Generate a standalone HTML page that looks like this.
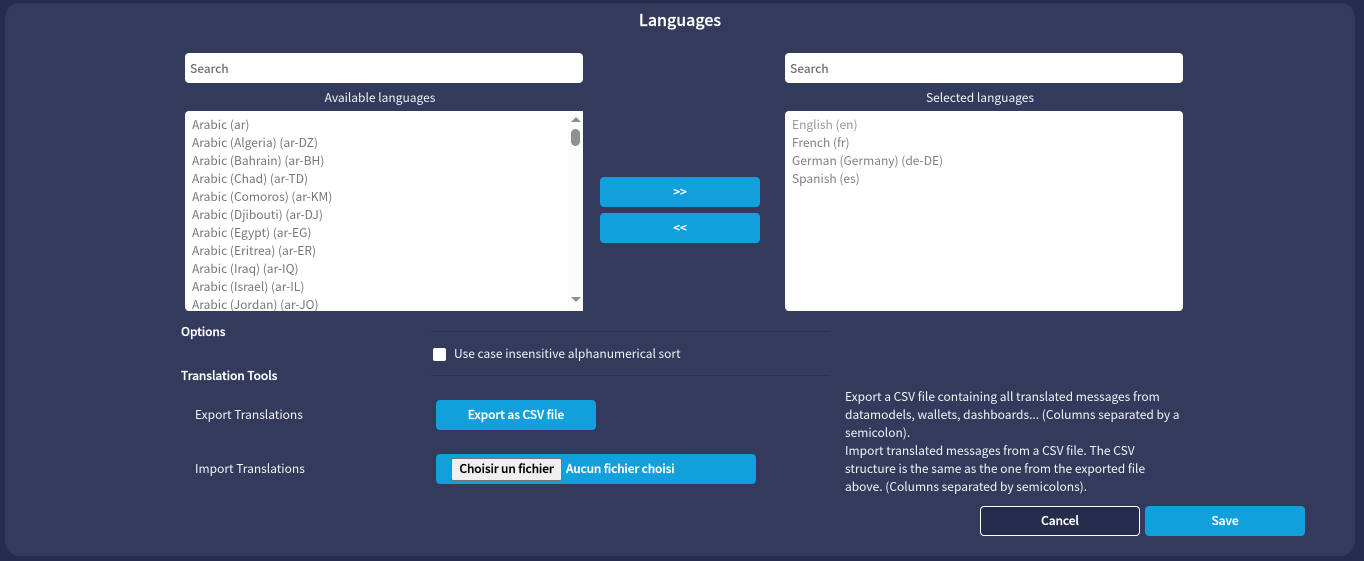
<!DOCTYPE html>
<html><head><meta charset="utf-8">
<style>
html,body{margin:0;padding:0;width:1364px;height:561px;overflow:hidden;background:#262c4e;font-family:"Noto Sans CJK JP","Liberation Sans",sans-serif;}
div{position:absolute;box-sizing:border-box}
.t{white-space:nowrap;font-size:12px;line-height:18px;color:#f2f3f6}
.c{text-align:center}
.b{font-weight:500;color:#fff;font-size:12px;letter-spacing:-.1px;-webkit-text-stroke:.2px #fff}
.box{background:#fff;border-radius:4px}
.btn{background:#11a0dc;border-radius:4px;height:30px;line-height:30px;text-align:center;color:#fff;font-weight:500;font-size:12px;white-space:nowrap;letter-spacing:-.1px;-webkit-text-stroke:.2px #fff}
.l{left:7px;white-space:nowrap;font-size:12px;line-height:18px;color:#777}
.ph{left:5px;top:7px;font-weight:500;font-size:12px;line-height:18px;color:#707070;letter-spacing:-.1px}
.hr{left:431px;width:399px;height:1px;background:#2b3153}
</style></head><body>
<div style="left:5px;top:3px;width:1350px;height:553px;background:#333a5c;border-radius:15px"></div>
<div class="c" style="left:5px;width:1350px;top:9px;color:#fff;font-weight:500;font-size:16px;line-height:20px;-webkit-text-stroke:.2px #fff">Languages</div>

<div class="box" style="left:185px;top:53px;width:398px;height:30px"><div class="ph">Search</div></div>
<div class="box" style="left:785px;top:53px;width:398px;height:30px"><div class="ph">Search</div></div>
<div class="t c" style="left:185px;top:89px;width:390px">Available languages</div>
<div class="t c" style="left:785px;top:89px;width:390px">Selected languages</div>

<div class="box" style="left:185px;top:111px;width:398px;height:200px;overflow:hidden;border-radius:4px 0 0 4px">
<div class="l" style="top:5px">Arabic (ar)</div>
<div class="l" style="top:23px">Arabic (Algeria) (ar-DZ)</div>
<div class="l" style="top:41px">Arabic (Bahrain) (ar-BH)</div>
<div class="l" style="top:59px">Arabic (Chad) (ar-TD)</div>
<div class="l" style="top:77px">Arabic (Comoros) (ar-KM)</div>
<div class="l" style="top:95px">Arabic (Djibouti) (ar-DJ)</div>
<div class="l" style="top:113px">Arabic (Egypt) (ar-EG)</div>
<div class="l" style="top:131px">Arabic (Eritrea) (ar-ER)</div>
<div class="l" style="top:149px">Arabic (Iraq) (ar-IQ)</div>
<div class="l" style="top:167px">Arabic (Israel) (ar-IL)</div>
<div class="l" style="top:185px">Arabic (Jordan) (ar-JO)</div>
<div style="left:383px;top:0;width:15px;height:200px;background:#fcfcfc"></div>
<svg style="position:absolute;left:383px;top:0" width="15" height="200"><path d="M3 11h10l-5-5z" fill="#8f8f8f"/><rect x="3" y="18" width="9" height="17" rx="4.5" fill="#8f8f8f"/><path d="M3 186h10l-5 5z" fill="#8f8f8f"/></svg>
</div>

<div class="box" style="left:785px;top:111px;width:398px;height:200px">
<div class="l" style="top:5px;color:#999">English (en)</div>
<div class="l" style="top:23px;color:#808080">French (fr)</div>
<div class="l" style="top:41px;color:#808080">German (Germany) (de-DE)</div>
<div class="l" style="top:59px;color:#808080">Spanish (es)</div>
</div>

<div class="btn" style="left:600px;top:177px;width:160px">&gt;&gt;</div>
<div class="btn" style="left:600px;top:213px;width:160px">&lt;&lt;</div>

<div class="t b" style="left:181px;top:323px">Options</div>
<div class="hr" style="top:331px"></div>
<div style="left:433px;top:348px;width:13px;height:13px;background:#fff;border-radius:2px"></div>
<div class="t" style="left:454px;top:345px">Use case insensitive alphanumerical sort</div>
<div class="hr" style="top:375px"></div>
<div class="t b" style="left:181px;top:367px">Translation Tools</div>

<div class="t" style="left:195px;top:406px">Export Translations</div>
<div class="btn" style="left:436px;top:400px;width:160px">Export as CSV file</div>
<div class="t" style="left:195px;top:460px">Import Translations</div>
<div class="btn" style="left:436px;top:454px;width:320px"></div>
<div style="left:451px;top:458px;width:111px;height:23px;background:#efefef;border:1px solid #767676;border-radius:2px;text-align:center;font-weight:500;font-size:12px;line-height:20px;color:#000;white-space:nowrap;letter-spacing:-.15px;-webkit-text-stroke:.2px #000">Choisir un fichier</div>
<div class="t b" style="left:566px;top:460px;letter-spacing:-.15px">Aucun fichier choisi</div>

<div class="t" style="left:845px;top:388px">Export a CSV file containing all translated messages from</div>
<div class="t" style="left:845px;top:406px">datamodels, wallets, dashboards... (Columns separated by a</div>
<div class="t" style="left:845px;top:424px">semicolon).</div>
<div class="t" style="left:845px;top:442px">Import translated messages from a CSV file. The CSV</div>
<div class="t" style="left:845px;top:460px">structure is the same as the one from the exported file</div>
<div class="t" style="left:845px;top:478px">above. (Columns separated by semicolons).</div>

<div class="btn" style="left:980px;top:506px;width:160px;background:#262c4e;border:1px solid #fff;line-height:28px">Cancel</div>
<div class="btn" style="left:1145px;top:506px;width:160px">Save</div>
</body></html>
